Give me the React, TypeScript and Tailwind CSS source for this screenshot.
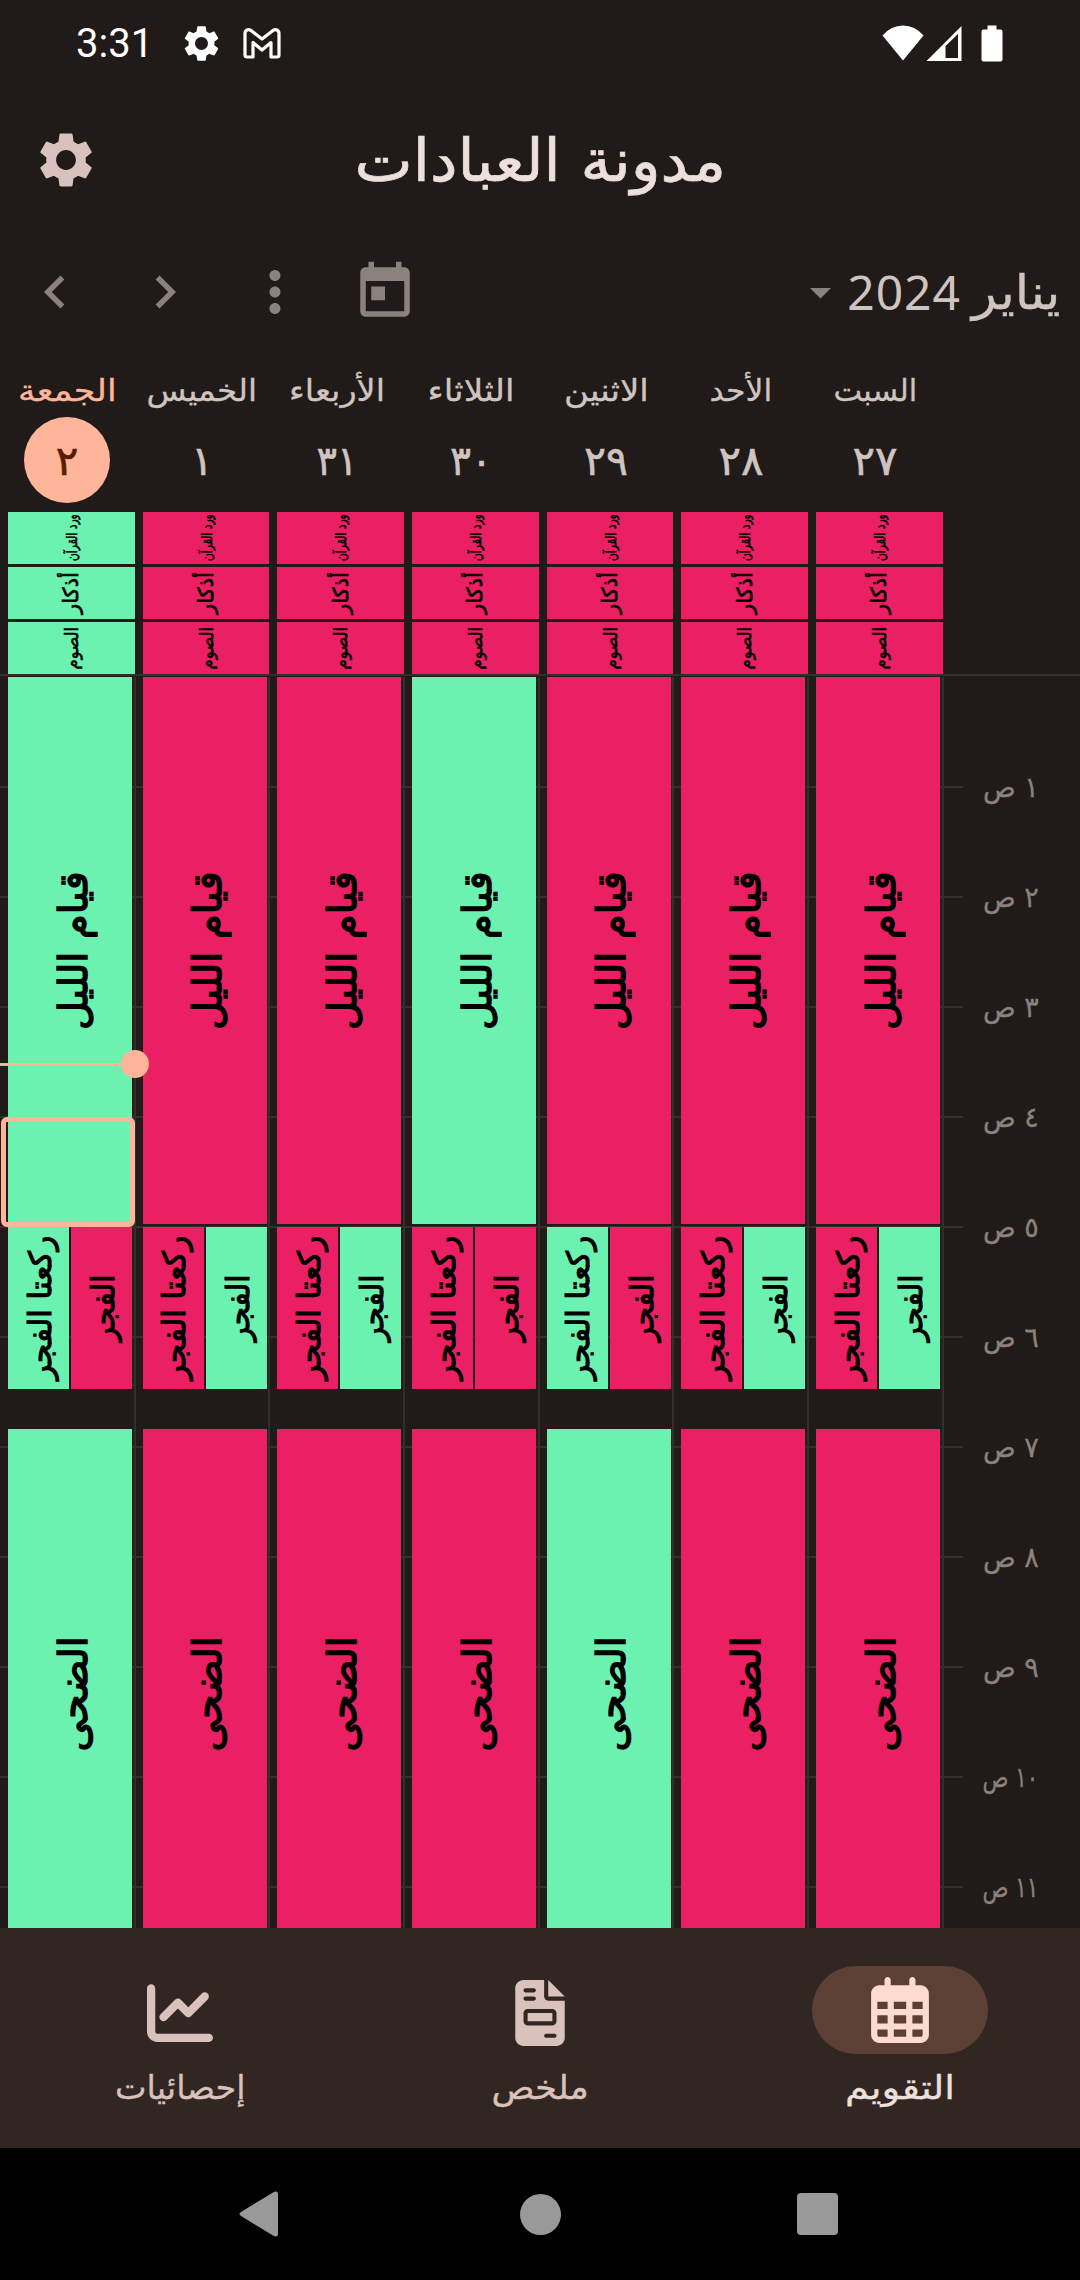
import { useLayoutEffect, useRef, useState } from "react";
import { FaChartLine, FaFileInvoice, FaRegCalendarDays } from "react-icons/fa6";

const GREEN = "bg-[#6bf2b0]";
const PINK = "bg-[#eb1f63]";
const tone = (done: boolean) => (done ? GREEN : PINK);

type FitProps = { text: string; width: number; className?: string };

/** One line of text, stretched or condensed to an exact width. */
function Fit({ text, width, className = "" }: FitProps) {
  const ref = useRef<HTMLSpanElement>(null);
  const [scale, setScale] = useState(1);
  useLayoutEffect(() => {
    if (ref.current) setScale(width / ref.current.offsetWidth);
  }, [text, width]);
  return (
    <span className={`flex shrink-0 justify-center whitespace-nowrap ${className}`} style={{ width }}>
      <span ref={ref} dir="rtl" className="shrink-0" style={{ transform: `scaleX(${scale})` }}>
        {text}
      </span>
    </span>
  );
}

type BlockProps = { text: string; length: number; done: boolean; box: string; type: string };

function Block({ text, length, done, box, type }: BlockProps) {
  return (
    <div className={`flex shrink-0 items-center justify-center text-black ${tone(done)} ${box}`}>
      <Fit text={text} width={length} className={`-rotate-90 ${type}`} />
    </div>
  );
}

type Day = {
  name: string;
  nameWidth: number;
  num: string;
  numWidth: number;
  today?: boolean;
  allDay: boolean;
  night: boolean;
  sunnah: boolean;
  fajr: boolean;
  duha: boolean;
};

const days: Day[] = [
  { name: "الجمعة", nameWidth: 99, num: "٢", numWidth: 23, today: true, allDay: true, night: true, sunnah: true, fajr: false, duha: true },
  { name: "الخميس", nameWidth: 110, num: "١", numWidth: 22, allDay: false, night: false, sunnah: false, fajr: true, duha: false },
  { name: "الأربعاء", nameWidth: 96, num: "٣١", numWidth: 41, allDay: false, night: false, sunnah: false, fajr: true, duha: false },
  { name: "الثلاثاء", nameWidth: 87, num: "٣٠", numWidth: 42, allDay: false, night: true, sunnah: false, fajr: false, duha: false },
  { name: "الاثنين", nameWidth: 85, num: "٢٩", numWidth: 44, allDay: false, night: false, sunnah: true, fajr: false, duha: true },
  { name: "الأحد", nameWidth: 63, num: "٢٨", numWidth: 45, allDay: false, night: false, sunnah: false, fajr: true, duha: false },
  { name: "السبت", nameWidth: 84, num: "٢٧", numWidth: 45, allDay: false, night: false, sunnah: false, fajr: true, duha: false },
];

const hours = ["١", "٢", "٣", "٤", "٥", "٦", "٧", "٨", "٩", "١٠", "١١"];

const GEAR =
  "M19.14 12.94c.04-.3.06-.61.06-.94 0-.32-.02-.64-.07-.94l2.03-1.58c.18-.14.23-.41.12-.61l-1.92-3.32c-.12-.22-.37-.29-.59-.22l-2.39.96c-.5-.38-1.03-.7-1.62-.94l-.36-2.54c-.04-.24-.24-.41-.48-.41h-3.84c-.24 0-.43.17-.47.41l-.36 2.54c-.59.24-1.13.57-1.62.94l-2.39-.96c-.22-.08-.47 0-.59.22L2.74 8.87c-.12.21-.08.47.12.61l2.03 1.58c-.05.3-.09.63-.09.94s.02.64.07.94l-2.03 1.58c-.18.14-.23.41-.12.61l1.92 3.32c.12.22.37.29.59.22l2.39-.96c.5.38 1.03.7 1.62.94l.36 2.54c.05.24.24.41.48.41h3.84c.24 0 .44-.17.47-.41l.36-2.54c.59-.24 1.13-.56 1.62-.94l2.39.96c.22.08.47 0 .59-.22l1.92-3.32c.12-.22.07-.47-.12-.61l-2.01-1.58zM12 15.6c-1.98 0-3.6-1.62-3.6-3.6s1.62-3.6 3.6-3.6 3.6 1.62 3.6 3.6-1.62 3.6-3.6 3.6z";

function Glyph({ d, className }: { d: string; className: string }) {
  return (
    <svg viewBox="0 0 24 24" fill="currentColor" className={`shrink-0 ${className}`}>
      <path d={d} />
    </svg>
  );
}

function StatusBar() {
  return (
    <div className="flex h-[88px] items-start justify-between pr-[77px] pl-[76px] text-white">
      <div className="flex items-start">
        <span className="mt-[20px] w-[72px] font-[Roboto] text-[40px] leading-[48px]">3:31</span>
        <Glyph d={GEAR} className="mt-[22px] ml-[32px] h-[43px] w-[43px]" />
        <svg viewBox="0 0 40 32" className="mt-[27px] ml-[19px] h-[32px] w-[40px]" fill="none" stroke="white" strokeWidth="3.2" strokeLinejoin="round">
          <path d="M3 28V6.500c0-3.500 3.500-5 6-3L20 12l11-8.500c2.500-2 6-.5 6 3V28q0 2-2 2h-6V15.500L20 23l-9-7.500V30H5q-2 0-2-2z" />
        </svg>
      </div>
      <svg viewBox="0 0 121 40" className="mt-[24px] h-[40px] w-[121px]" fill="white">
        <path d="M0.500 11.500Q9 1.500 21 1.500T41.500 11.500L21 36.500z" />
        <path fillRule="evenodd" d="M44.500 37L79.500 2v35zM63.500 22v12h12.500V10z" />
        <path d="M105.500 1.500h9v4h4q2 0 2 2v28q0 2-2 2h-17q-2 0-2-2v-28q0-2 2-2h4z" />
      </svg>
    </div>
  );
}

function Toolbar() {
  return (
    <div className="flex h-[144px] items-center justify-between pr-[20px] text-[#8c817e]">
      <div className="flex items-center">
        <div className="flex w-[110px] justify-center">
          <Glyph d="M15.410 7.410L14 6l-6 6 6 6 1.410-1.410L10.830 12z" className="h-[66px] w-[66px]" />
        </div>
        <div className="flex w-[110px] justify-center">
          <Glyph d="M10 6L8.590 7.410 13.170 12l-4.580 4.590L10 18l6-6z" className="h-[66px] w-[66px]" />
        </div>
        <div className="flex w-[110px] justify-center">
          <Glyph d="M12 8c1.100 0 2-.9 2-2s-.9-2-2-2-2 .9-2 2 .9 2 2 2zm0 2c-1.100 0-2 .9-2 2s.9 2 2 2 2-.9 2-2-.9-2-2-2zm0 6c-1.100 0-2 .9-2 2s.9 2 2 2 2-.9 2-2-.9-2-2-2z" className="h-[66px] w-[66px]" />
        </div>
        <div className="flex w-[110px] justify-center">
          <Glyph d="M19 3h-1V1h-2v2H8V1H6v2H5c-1.110 0-1.990.9-1.990 2L3 19c0 1.100.890 2 2 2h14c1.100 0 2-.9 2-2V5c0-1.100-.9-2-2-2zm0 16H5V8h14v11zM7 10h5v5H7z" className="h-[66px] w-[66px]" />
        </div>
      </div>
      <div className="flex items-center">
        <svg viewBox="0 0 20 10" className="mt-[3px] mr-[16px] h-[10.500px] w-[21px]" fill="currentColor">
          <path d="M0 0h20L10 10z" />
        </svg>
        <span className="mr-[11px] font-['Noto_Sans'] text-[48px] leading-[64px] tracking-[1px] text-[#d0c4c0]">2024</span>
        <Fit text="يناير" width={88} className="text-[48px] leading-[64px] text-[#d0c4c0] [-webkit-text-stroke:0.4px]" />
      </div>
    </div>
  );
}

function DayHeader({ day }: { day: Day }) {
  return (
    <div className={`flex w-[134.700px] shrink-0 flex-col items-center ${day.today ? "text-[#ffb59a]" : "text-[#d0c4c0]"}`}>
      <Fit text={day.name} width={day.nameWidth} className="mt-[7px] text-[30px] leading-[40px] [-webkit-text-stroke:0.3px]" />
      <div className={`mt-[6px] flex h-[86px] w-[86px] items-center justify-center rounded-full ${day.today ? "bg-[#ffb59a] text-[#5b1b00]" : ""}`}>
        <Fit text={day.num} width={day.numWidth} className="pt-[2px] text-[41px] leading-[50px] [-webkit-text-stroke:0.6px]" />
      </div>
    </div>
  );
}

function DayColumn({ day }: { day: Day }) {
  return (
    <div className="-mr-px flex w-[135.700px] shrink-0 flex-col border-r-2 border-[#342e2c] pl-[8px]">
      <Block text="قيام الليل" length={159} done={day.night} box="h-[547px] w-[124px] pl-[4px]" type="text-[40px] leading-[50px] [-webkit-text-stroke:1.4px]" />
      <div className="mt-[3px] flex gap-[2px]">
        <Block text="ركعتا الفجر" length={144} done={day.sunnah} box="h-[162px] w-[61px] pl-[2px]" type="text-[31px] leading-[40px] [-webkit-text-stroke:1.1px]" />
        <Block text="الفجر" length={67} done={day.fajr} box="h-[162px] w-[61px] pl-[2px]" type="text-[31px] leading-[40px] [-webkit-text-stroke:1.1px]" />
      </div>
      <Block text="الضحى" length={115} done={day.duha} box="mt-[40px] h-[530px] w-[124px] pl-[4px]" type="text-[40px] leading-[50px] [-webkit-text-stroke:1.4px]" />
    </div>
  );
}

function Calendar() {
  return (
    <div className="flex h-[1564px] flex-col overflow-hidden">
      <div className="flex h-[148px]">
        {days.map((d) => (
          <DayHeader key={d.name} day={d} />
        ))}
      </div>
      <div className="flex h-[162px]">
        {days.map((d) => (
          <div key={d.name} className="flex w-[134.700px] shrink-0 flex-col gap-[3px] pl-[8px]">
            <Block text="ورد القرآن" length={47} done={d.allDay} box="h-[52px] w-[126.700px]" type="text-[15px] leading-[20px] [-webkit-text-stroke:0.5px]" />
            <Block text="أذكار" length={42} done={d.allDay} box="h-[52px] w-[126.700px]" type="text-[21px] leading-[24px] [-webkit-text-stroke:0.7px]" />
            <Block text="الصوم" length={43} done={d.allDay} box="h-[52px] w-[126.700px]" type="text-[18px] leading-[22px] [-webkit-text-stroke:0.6px]" />
          </div>
        ))}
      </div>
      <div className="h-[3px] shrink-0 border-t-2 border-[#342e2c]" />
      <div className="relative flex h-[1251px] overflow-hidden">
        <div className="absolute top-px left-0 w-[963px]">
          {hours.map((h) => (
            <div key={h} className="h-[110px] border-b-2 border-[#342e2c]" />
          ))}
        </div>
        <div className="relative flex h-[1306px]">
          {days.map((d) => (
            <DayColumn key={d.name} day={d} />
          ))}
        </div>
        <div className="flex flex-col items-center pt-[56px] pl-[40px] text-[#8c817e]">
          {hours.map((h) => (
            <div key={h} className="flex h-[110px] shrink-0 items-center">
              <Fit text={`${h} ص`} width={56} className="text-[28px] leading-[36px] [-webkit-text-stroke:0.3px]" />
            </div>
          ))}
        </div>
        <div className="absolute top-[440px] left-[1px] h-[110px] w-[134px] rounded-[6px] border-[5px] border-[#ffb59a]" />
        <div className="absolute top-[373px] left-0 flex h-[28px] w-[149px] items-center">
          <div className="h-[3px] w-[121px] bg-[#ffb59a]" />
          <div className="h-[28px] w-[28px] rounded-full bg-[#ffb59a]" />
        </div>
      </div>
    </div>
  );
}

function BottomNav() {
  return (
    <div className="flex h-[220px] bg-[#322622] pt-[38px] text-[#d8c2bb]">
      <div className="flex w-[360px] flex-col items-center">
        <div className="flex h-[88px] w-[176px] items-center justify-center pt-[6px]">
          <FaChartLine className="h-[66px] w-[66px]" />
        </div>
        <Fit text="إحصائيات" width={131} className="mt-[10px] text-[33px] leading-[48px] [-webkit-text-stroke:0.3px]" />
      </div>
      <div className="flex w-[360px] flex-col items-center">
        <div className="flex h-[88px] w-[176px] items-center justify-center pt-[6px]">
          <FaFileInvoice className="h-[66px] w-[50px]" />
        </div>
        <Fit text="ملخص" width={97} className="mt-[10px] text-[33px] leading-[48px] [-webkit-text-stroke:0.3px]" />
      </div>
      <div className="flex w-[360px] flex-col items-center text-[#ede0dc]">
        <div className="flex h-[88px] w-[176px] items-center justify-center rounded-full bg-[#5d4035]">
          <FaRegCalendarDays className="h-[66px] w-[58px] text-[#ffdbcf]" />
        </div>
        <Fit text="التقويم" width={110} className="mt-[10px] text-[33px] leading-[48px] [-webkit-text-stroke:0.3px]" />
      </div>
    </div>
  );
}

export default function App() {
  return (
    <div className="flex h-[2280px] w-[1080px] flex-col overflow-hidden bg-[#201a18] font-['DejaVu_Sans',sans-serif]">
      <StatusBar />
      <div className="flex h-[132px] items-start">
        <Glyph d={GEAR} className="mt-[39px] ml-[33px] h-[66px] w-[66px] text-[#d8c2bb]" />
        <div className="flex grow justify-center pt-[33px] pr-[99px]">
          <Fit text="مدونة العبادات" width={372} className="text-[59px] leading-[80px] text-[#ede0dc] [-webkit-text-stroke:0.7px]" />
        </div>
      </div>
      <Toolbar />
      <Calendar />
      <BottomNav />
      <div className="flex h-[132px] items-center bg-black pl-[239px]">
        <svg viewBox="0 0 39 46" className="h-[46px] w-[39px]" fill="#999999">
          <path d="M2 21L34 1.500q5-2.500 5 2v39q0 4.500-5 2L2 25q-3-2 0-4z" />
        </svg>
        <div className="ml-[242px] h-[41px] w-[41px] rounded-full bg-[#999999]" />
        <div className="ml-[236px] h-[42px] w-[41px] rounded-[4px] bg-[#999999]" />
      </div>
    </div>
  );
}
